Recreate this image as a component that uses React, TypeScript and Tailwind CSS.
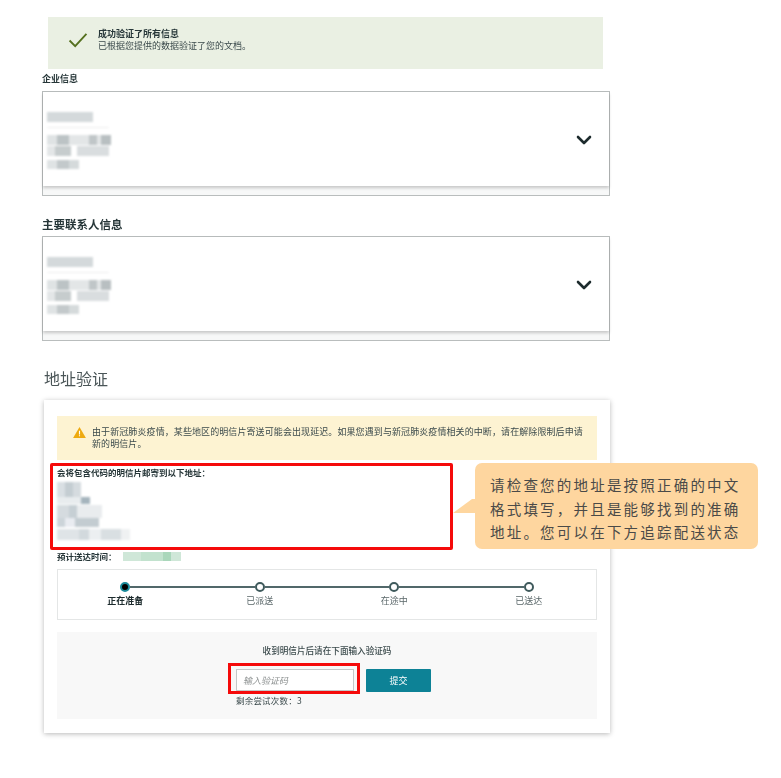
import { ChevronDown } from 'lucide-react';

function InfoCard() {
  return (
    <div className="mt-[6px] flex h-[105px] w-[568px] flex-col border border-[#b9bdbd] bg-[#f7f8f8]">
      <div className="flex h-[94px] items-center justify-between bg-white pr-[13px] shadow-[0_2px_3px_rgba(0,0,0,0.2)]">
        <div className="ml-[4px] mt-[3px] flex w-[66px] flex-col blur-[1px]">
          <div className="h-[10px] w-[46px] bg-[#d4d9db]" />
          <div className="mt-[5px] h-px w-[62px] bg-[#eeeeee]" />
          <div className="mt-[7px] flex h-[10px] w-[64px]">
            <div className="w-[10px] bg-[#dfe3e4]" />
            <div className="w-[12px] bg-[#bcc3c5]" />
            <div className="w-[20px] bg-[#e3e6e7]" />
            <div className="w-[8px] bg-[#c0c6c8]" />
            <div className="w-[4px] bg-[#e3e6e7]" />
            <div className="w-[10px] bg-[#b8bfc1]" />
          </div>
          <div className="mt-px flex h-[10px] w-[62px]">
            <div className="w-[8px] bg-[#e3e6e7]" />
            <div className="w-[16px] bg-[#c6cccd]" />
            <div className="w-[6px] bg-white" />
            <div className="w-[32px] bg-[#d9dddf]" />
          </div>
          <div className="mt-[4px] flex h-[9px] w-[32px]">
            <div className="w-[10px] bg-[#dfe3e4]" />
            <div className="w-[12px] bg-[#c3c9cb]" />
            <div className="w-[10px] bg-[#d5dadb]" />
          </div>
        </div>
        <ChevronDown className="mt-[2px] h-[24px] w-[24px] text-[#1d2b2d]" strokeWidth={2.6} />
      </div>
    </div>
  );
}

export default function App() {
  const steps = ['正在准备', '已派送', '在途中', '已送达'];

  return (
    <div className="relative h-[778px] w-[781px] overflow-hidden bg-white font-['Noto_Sans_CJK_SC','Liberation_Sans',sans-serif] text-[#3b4a4c]">
      <div className="pl-[42px] pt-[17px] blur-[0.5px]">
        <div className="ml-[6px] flex h-[52px] w-[555px] items-center bg-[#eaf0e3] pb-[6px] pl-[20px]">
          <svg viewBox="0 0 20 16" className="h-[15px] w-[20px] text-[#55701f]" fill="none" stroke="currentColor" strokeWidth="2">
            <path d="M1 8l6 6L19 1" />
          </svg>
          <div className="ml-[10px] text-[9px] leading-[12px]">
            <div className="font-bold text-[#263638]">成功验证了所有信息</div>
            <div>已根据您提供的数据验证了您的文档。</div>
          </div>
        </div>

        <div className="mt-[4px] h-[12px] text-[9px] font-bold leading-[12px] text-[#263638]">企业信息</div>
        <InfoCard />

        <div className="mt-[22px] h-[12px] text-[11.5px] font-bold leading-[12px] text-[#263638]">主要联系人信息</div>
        <InfoCard />

        <h2 className="ml-[2px] mt-[27px] h-[20px] text-[16px] leading-[20px] text-[#4a5557]">地址验证</h2>

        <div className="ml-[2px] mt-[12px] h-[333px] w-[566px] bg-white px-[13px] pt-[16px] shadow-[0_1px_5px_rgba(0,0,0,0.28)]">
          <div className="flex h-[44px] w-[540px] bg-[#fdf3d2] pl-[16px] pt-[10px]">
            <svg viewBox="0 0 14 12" className="mt-px h-[11px] w-[13px] shrink-0">
              <path d="M7 0l7 12H0z" fill="#eeaa10" />
              <path d="M6.4 4h1.2v4.2H6.4zM6.4 9h1.2v1.2H6.4z" fill="#fff" />
            </svg>
            <p className="ml-[6px] w-[495px] text-[9px] leading-[12px] tracking-[0.09px]">
              由于新冠肺炎疫情，某些地区的明信片寄送可能会出现延迟。如果您遇到与新冠肺炎疫情相关的中断，请在解除限制后申请新的明信片。
            </p>
          </div>

          <div className="-ml-[7px] mt-[3px] h-[87px] w-[403px] rounded-[2px] border-[3px] border-[#f50a0a] pl-[4px]">
            <div className="text-[8.5px] font-bold leading-[12px] text-[#263638]">会将包含代码的明信片邮寄到以下地址：</div>
            <div className="mt-[4px] flex flex-col blur-[1px]">
              <div className="flex h-[15px] w-[24px]">
                <div className="w-[8px] bg-[#d9dfe3]" />
                <div className="w-[8px] bg-[#c4cdd2]" />
                <div className="w-[8px] bg-[#d5dbdf]" />
              </div>
              <div className="flex h-[7px] w-[33px]">
                <div className="w-[24px] bg-[#e8ecee]" />
                <div className="w-[9px] bg-[#a5b4bd]" />
              </div>
              <div className="mt-px flex h-[13px] w-[45px]">
                <div className="w-[12px] bg-[#d5dbdf]" />
                <div className="w-[8px] bg-[#c6cfd4]" />
                <div className="w-[25px] bg-[#e9ecee]" />
              </div>
              <div className="flex h-[9px] w-[42px]">
                <div className="w-[8px] bg-[#ccd4d9]" />
                <div className="w-[10px] bg-[#e9ecf1]" />
                <div className="w-[24px] bg-[#c3ccd1]" />
              </div>
              <div className="mt-[2px] flex h-[11px] w-[73px]">
                <div className="w-[22px] bg-[#dfe4e7]" />
                <div className="w-[10px] bg-[#d2d9dd]" />
                <div className="w-[12px] bg-[#eceff1]" />
                <div className="w-[20px] bg-[#d9dfe2]" />
                <div className="w-[9px] bg-[#eff1f2]" />
              </div>
            </div>
          </div>

          <div className="flex h-[12px] items-center text-[8.5px] font-bold leading-[12px] text-[#263638]">
            <span className="w-[66px]">预计送达时间：</span>
            <div className="flex h-[9px] w-[58px] blur-[0.6px]">
              <div className="w-[18px] bg-[#cfe7d8]" />
              <div className="w-[22px] bg-[#c2e2ce]" />
              <div className="w-[8px] bg-[#aad7bb]" />
              <div className="w-[10px] bg-[#cfe7d8]" />
            </div>
          </div>

          <div className="mt-[7px] h-[51px] w-[540px] border border-[#e4e6e6] pt-[12px]">
            <div className="mx-[62px] flex items-center">
              <div className="h-[10px] w-[10px] shrink-0 rounded-full border-2 border-[#1a8a9a] bg-black" />
              <div className="h-[2px] flex-1 bg-[#51686a]" />
              <div className="h-[10px] w-[10px] shrink-0 rounded-full border-2 border-[#3f5a5c] bg-white" />
              <div className="h-[2px] flex-1 bg-[#51686a]" />
              <div className="h-[10px] w-[10px] shrink-0 rounded-full border-2 border-[#3f5a5c] bg-white" />
              <div className="h-[2px] flex-1 bg-[#51686a]" />
              <div className="h-[10px] w-[10px] shrink-0 rounded-full border-2 border-[#3f5a5c] bg-white" />
            </div>
            <div className="mt-[3px] grid grid-cols-4 text-center text-[9px] leading-[12px]">
              {steps.map((step, i) => (
                <div key={step} className={i === 0 ? 'font-bold text-[#1d2b2d]' : 'text-[#5a6769]'}>
                  {step}
                </div>
              ))}
            </div>
          </div>

          <div className="mt-[12px] h-[87px] w-[540px] bg-[#f8f8f8] pt-[12px]">
            <div className="text-center text-[8.6px] font-medium leading-[12px]">收到明信片后请在下面输入验证码</div>
            <div className="ml-[171px] mt-[7px] flex items-start">
              <div className="h-[31px] w-[132px] border-[3px] border-[#f50a0a] pl-[5px] pr-[3px] pt-[3px]">
                <input
                  placeholder="输入验证码"
                  className="block h-[22px] w-[118px] border border-[#c4c8c8] bg-white pl-[6px] text-[9px] italic outline-none placeholder:text-[#8b8f8f]"
                />
              </div>
              <button className="ml-[6px] mt-[6px] h-[23px] w-[65px] rounded-[1px] bg-[#0d8296] text-[9px] text-white">提交</button>
            </div>
            <div className="ml-[179px] text-[8.5px] leading-[12px] tracking-[0.2px]">剩余尝试次数：3</div>
          </div>
        </div>
      </div>

      <div className="absolute left-[453px] top-[463px] flex">
        <svg viewBox="0 0 22 14" className="mt-[36px] h-[14px] w-[22px]">
          <path d="M0 14L19 0l3 0v14z" fill="#fed69f" />
        </svg>
        <div className="h-[86px] w-[283px] rounded-[7px] bg-[#fed69f] pl-[15px] pt-[10px] text-[14.5px] leading-[23.5px] tracking-[2.2px] text-[#4a4a48]">
          <div className="whitespace-nowrap">请检查您的地址是按照正确的中文</div>
          <div className="whitespace-nowrap">格式填写，并且是能够找到的准确</div>
          <div className="whitespace-nowrap">地址。您可以在下方追踪配送状态</div>
        </div>
      </div>
    </div>
  );
}
